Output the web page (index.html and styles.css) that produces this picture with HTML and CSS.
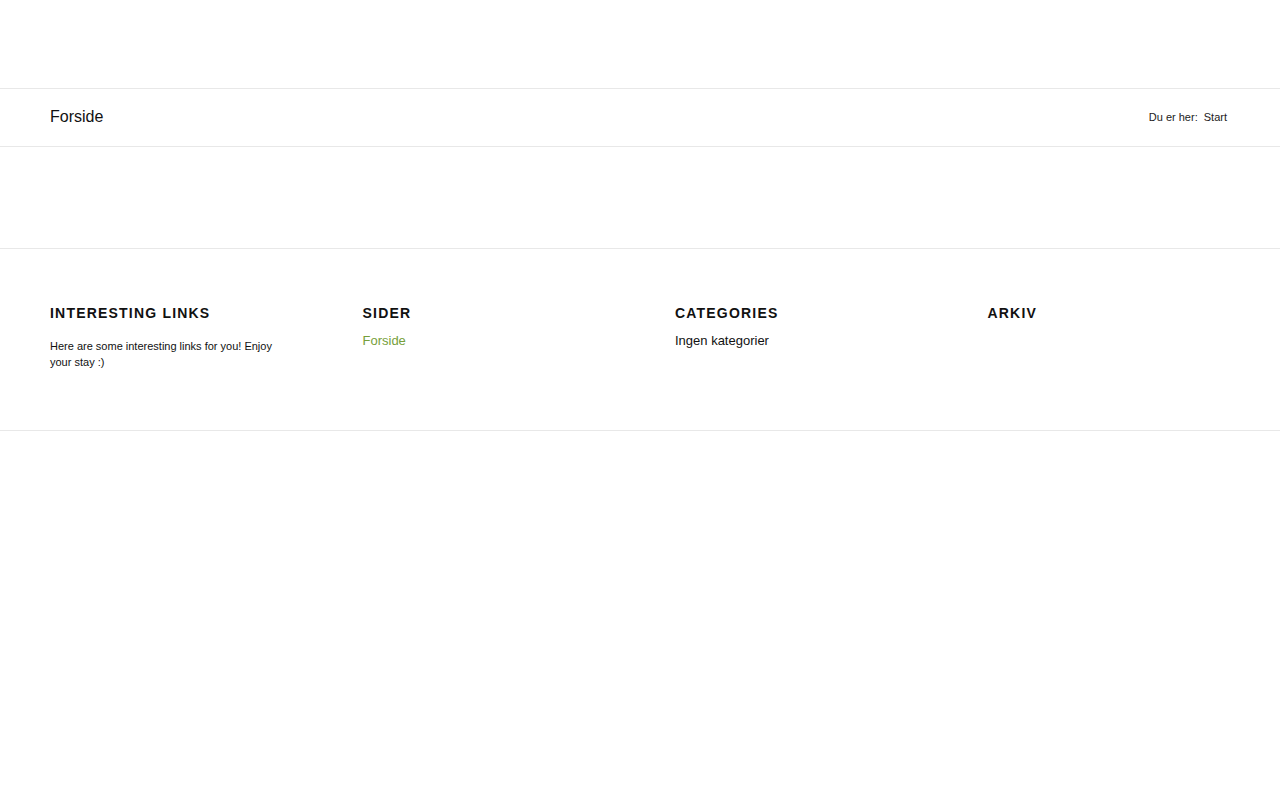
FILE: index.html
```html
<!DOCTYPE html>
<html lang="no">
<head>
<meta charset="utf-8">
<title>Forside</title>
<link rel="stylesheet" href="styles.css">
</head>
<body>
<header class="site-header"></header>
<div class="page-title-bar">
  <h1 class="page-title">Forside</h1>
  <div class="breadcrumb"><span class="label">Du er her:</span> <span class="crumb">Start</span></div>
</div>
<main class="content"></main>
<footer class="footer">
  <div class="footer-grid">
    <div class="widget">
      <h3 class="widget-title">Interesting links</h3>
      <p class="widget-text">Here are some interesting links for you! Enjoy your stay :)</p>
    </div>
    <div class="widget">
      <h3 class="widget-title">Sider</h3>
      <a class="widget-link" href="#">Forside</a>
    </div>
    <div class="widget">
      <h3 class="widget-title">Categories</h3>
      <div class="widget-item">Ingen kategorier</div>
    </div>
    <div class="widget">
      <h3 class="widget-title">Arkiv</h3>
    </div>
  </div>
</footer>
</body>
</html>
```

FILE: styles.css
```css
* { box-sizing: border-box; }
html, body { margin: 0; padding: 0; background: #fff; }
body {
  font-family: "Liberation Sans", Arial, sans-serif;
  color: #111;
}
.site-header { height: 88px; }
.page-title-bar {
  border-top: 1px solid #e8e8e8;
  border-bottom: 1px solid #e8e8e8;
  height: 59px;
  padding: 0 53px 2px 50px;
  display: flex;
  align-items: center;
  justify-content: space-between;
}
.page-title {
  margin: 0;
  font-size: 16px;
  font-weight: normal;
  color: #111;
}
.breadcrumb { font-size: 11px; color: #222; }
.breadcrumb .label { margin-right: 3px; }
.content { height: 101px; }
.footer {
  border-top: 1px solid #e8e8e8;
  border-bottom: 1px solid #e8e8e8;
  height: 183px;
  padding: 55px 0 0 50px;
}
.footer-grid {
  display: grid;
  grid-template-columns: repeat(4, 312.5px);
}
.widget-title {
  margin: 0 0 11px;
  font-size: 14px;
  font-weight: bold;
  letter-spacing: 1.2px;
  text-transform: uppercase;
  color: #111;
  line-height: 18px;
}
.widget-text {
  margin: 0;
  padding-top: 5px;
  font-size: 11px;
  line-height: 16px;
  max-width: 235px;
  color: #111;
}
.widget-link {
  display: block;
  font-size: 13px;
  line-height: 16px;
  color: #76a03a;
  text-decoration: none;
}
.widget-item {
  font-size: 13px;
  line-height: 16px;
  color: #111;
}
```
